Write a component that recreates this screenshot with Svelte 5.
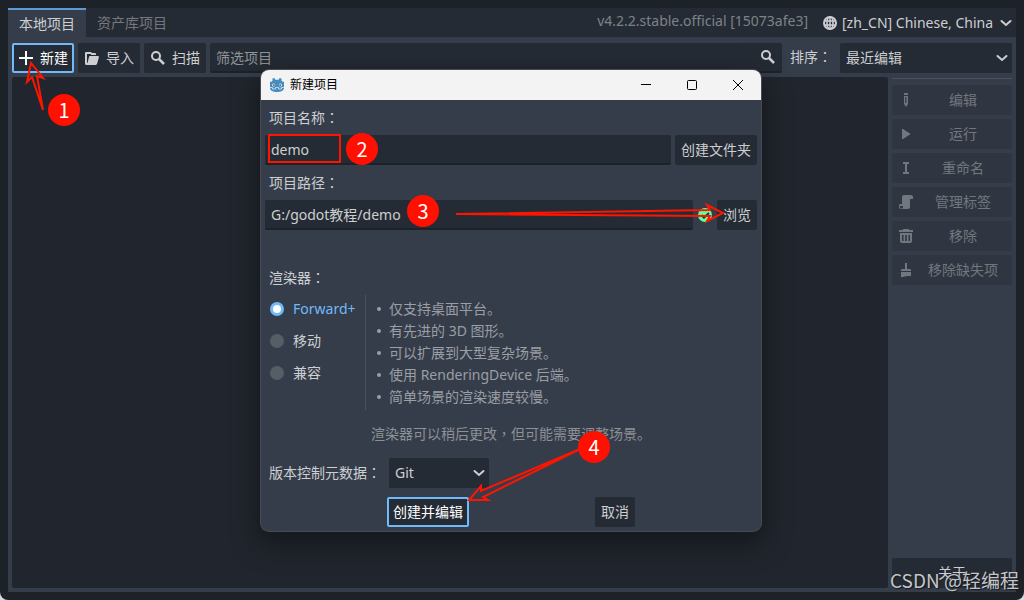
<script lang="ts">
  let name = $state('demo')
  let path = $state('G:/godot教程/demo')
  let filter = $state('')
  let renderer = $state('forward')

  const renderers = [
    { id: 'forward', label: 'Forward+' },
    { id: 'mobile', label: '移动' },
    { id: 'compat', label: '兼容' },
  ]

  const features = [
    '仅支持桌面平台。',
    '有先进的 3D 图形。',
    '可以扩展到大型复杂场景。',
    '使用 RenderingDevice 后端。',
    '简单场景的渲染速度较慢。',
  ]

  const actions = [
    { icon: 'edit', label: '编辑' },
    { icon: 'play', label: '运行' },
    { icon: 'rename', label: '重命名' },
    { icon: 'tags', label: '管理标签' },
    { icon: 'remove', label: '移除' },
    { icon: 'clear', label: '移除缺失项' },
  ]

  // tutorial steps, positioned on the page canvas
  const steps = [
    { n: 1, x: 64, y: 110 },
    { n: 2, x: 362, y: 149 },
    { n: 3, x: 423, y: 211 },
    { n: 4, x: 594, y: 447 },
  ]
</script>

{#snippet icon(kind: string)}
  <svg class="icon" width="16" height="16" viewBox="0 0 16 16" aria-hidden="true">
    {#if kind === 'add'}
      <path d="M7 1h2v6h6v2H9v6H7V9H1V7h6z" />
    {:else if kind === 'folder'}
      <path d="M2 2a1 1 0 0 0-1 1v10.500a1.500 1.500 0 0 0 1.500 1.500H11a2 2 0 0 0 2-1l2-7a1 1 0 0 0-1-1H6a1 1 0 0 0-1 1l-1.500 6H3V4h4v1h5V4a1 1 0 0 0-1-1H8L7 2z" />
    {:else if kind === 'search'}
      <circle cx="6" cy="6" r="4" fill="none" stroke="currentColor" stroke-width="2" />
      <path d="M9 9l5 5" stroke="currentColor" stroke-width="2.500" />
    {:else if kind === 'globe'}
      <circle cx="8" cy="8" r="6" fill="none" stroke="currentColor" stroke-width="2" />
      <ellipse cx="8" cy="8" rx="3" ry="6" fill="none" stroke="currentColor" stroke-width="1.600" />
      <path d="M8 2v12M2 6h12M2 10h12" stroke="currentColor" stroke-width="1.500" />
    {:else if kind === 'edit'}
      <path d="M7 1h2a1 1 0 0 1 1 1v1H6V2a1 1 0 0 1 1-1zM6 4h4v8l-2 3-2-3zm1.200 1v6h1.200V5z" fill-rule="evenodd" />
    {:else if kind === 'play'}
      <path d="M4 3.500v9a.7.7 0 0 0 1 .5l7-4.400a.7.7 0 0 0 0-1.200L5 3a.7.7 0 0 0-1 .5z" />
    {:else if kind === 'rename'}
      <path d="M5 2h6v2H9v8h2v2H5v-2h2V4H5z" />
    {:else if kind === 'tags'}
      <path d="M6 1a2 2 0 0 0-2 2v7H2.500A1.500 1.500 0 0 0 1 11.500V13a2 2 0 0 0 2 2h7a2 2 0 0 0 2-2V5h3V3a2 2 0 0 0-2-2zM2 12h3v1a1 1 0 0 1-3 0z" fill-rule="evenodd" />
    {:else if kind === 'remove'}
      <path d="M5 1h6v1h4v2H1V2h4zM2 5h12v8a2 2 0 0 1-2 2H4a2 2 0 0 1-2-2zm2 2v6h1.500V7zm3.200 0v6h1.600V7zm3.300 0v6H12V7z" fill-rule="evenodd" />
    {:else if kind === 'clear'}
      <path d="M7 1h2v6h3a1 1 0 0 1 1 1v1H3V8a1 1 0 0 1 1-1h3zM3 10h10v4H9l-4 1H3z" />
    {:else if kind === 'valid'}
      <circle cx="8" cy="8" r="7" fill="#5fff97" />
      <path d="M4.500 8.200l2.500 2.500 5-4.700" fill="none" stroke="#252b34" stroke-width="2" />
    {:else if kind === 'chevron'}
      <path d="M3.500 6L8 10l4.500-4" fill="none" stroke="currentColor" stroke-width="2" stroke-linecap="round" />
    {:else if kind === 'godot'}
      <path d="M3.500 1.500L5.500 1l.8 1.700h3.400L10.500 1l2 .5v2.300L14 5l1-.5V11c0 2.700-3.200 4-7 4s-7-1.300-7-4V4.500L2 5l1.500-1.200z" fill="#478cbf" />
      <path d="M1 10.500h2.500V12h3v-1.500h3V12h3v-1.500H15" fill="none" stroke="#dcebf5" stroke-width=".8" />
      <circle cx="4.700" cy="8" r="1.500" fill="#fff" />
      <circle cx="11.300" cy="8" r="1.500" fill="#fff" />
      <circle cx="4.900" cy="8.100" r=".9" fill="#414042" />
      <circle cx="11.100" cy="8.100" r=".9" fill="#414042" />
    {/if}
  </svg>
{/snippet}

<div class="page">
  <div class="manager">
    <header class="tabs">
      <button type="button" class="tab active">本地项目</button>
      <button type="button" class="tab">资产库项目</button>
      <span class="version">v4.2.2.stable.official [15073afe3]</span>
      <div class="language">
        {@render icon('globe')}
        <select aria-label="Language">
          <option>[zh_CN] Chinese, China</option>
        </select>
        {@render icon('chevron')}
      </div>
    </header>

    <main class="panel">
      <div class="toolbar">
        <button type="button" class="btn focused">{@render icon('add')}新建</button>
        <button type="button" class="btn">{@render icon('folder')}导入</button>
        <button type="button" class="btn">{@render icon('search')}扫描</button>
        <div class="search">
          <input type="text" aria-label="筛选项目" placeholder="筛选项目" bind:value={filter} />
          {@render icon('search')}
        </div>
        <label class="caption" for="sort">排序<span class="mid">：</span></label>
        <div class="picker sort">
          <select id="sort">
            <option>最近编辑</option>
          </select>
          {@render icon('chevron')}
        </div>
      </div>

      <div class="content">
        <div class="projects"></div>
        <aside class="sidebar">
          <hr />
          {#each actions as action}
            <button type="button" class="btn action" disabled>
              {@render icon(action.icon)}
              <span>{action.label}</span>
            </button>
          {/each}
          <button type="button" class="btn about">关于</button>
        </aside>
      </div>
    </main>
  </div>

  <div class="dialog" role="dialog" aria-labelledby="dialog-title">
    <div class="titlebar">
      {@render icon('godot')}
      <h1 id="dialog-title">新建项目</h1>
      <button type="button" aria-label="最小化">
        <svg width="12" height="12" viewBox="0 0 12 12"><path d="M1 5.500h10" /></svg>
      </button>
      <button type="button" aria-label="最大化">
        <svg width="12" height="12" viewBox="0 0 12 12"><rect x="1.500" y="1.500" width="9" height="9" rx="1" /></svg>
      </button>
      <button type="button" aria-label="关闭">
        <svg width="12" height="12" viewBox="0 0 12 12"><path d="M1 1l10 10M11 1L1 11" /></svg>
      </button>
    </div>

    <form class="form">
      <label class="caption" for="name">项目名称<span class="mid">：</span></label>
      <div class="row">
        <input id="name" type="text" bind:value={name} />
        <button type="button" class="btn">创建文件夹</button>
      </div>

      <label class="caption" for="path">项目路径<span class="mid">：</span></label>
      <div class="row">
        <input id="path" type="text" bind:value={path} />
        {@render icon('valid')}
        <button type="button" class="btn">浏览</button>
      </div>

      <div class="message"></div>

      <div class="caption" id="renderer-label">渲染器<span class="mid">：</span></div>
      <div class="renderer">
        <div class="radios" role="radiogroup" aria-labelledby="renderer-label">
          {#each renderers as item}
            <label class:checked={renderer === item.id}>
              <input type="radio" name="renderer" value={item.id} bind:group={renderer} />
              {item.label}
            </label>
          {/each}
        </div>
        <ul>
          {#each features as feature}
            <li>{feature}</li>
          {/each}
        </ul>
      </div>
      <p class="note">渲染器可以稍后更改<span class="mid">，</span>但可能需要调整场景。</p>

      <div class="row">
        <label class="caption" for="vcs">版本控制元数据<span class="mid">：</span></label>
        <div class="picker vcs">
          <select id="vcs">
            <option>Git</option>
          </select>
          {@render icon('chevron')}
        </div>
      </div>

      <div class="buttons">
        <button type="button" class="btn focused">创建并编辑</button>
        <button type="button" class="btn">取消</button>
      </div>
    </form>
  </div>

  <div class="watermark">CSDN @轻编程</div>

  <svg class="arrows" aria-hidden="true">
    <rect x="269" y="135" width="71" height="27" />
    <path d="M43 110L37 76l6 2-12-15-4 19 5-5z" />
    <path d="M456 214l254-4-3-5 16 8-16 8 3-5z" />
    <path d="M580 449l-99 42v-5l-12 14h19l-5-3z" />
  </svg>
  {#each steps as step}
    <span class="step" style="left: {step.x}px; top: {step.y}px">{step.n}</span>
  {/each}
</div>

<style>
  :global(body) {
    background: #d8dade;
  }
  .page {
    position: relative;
    box-sizing: border-box;
    display: flex;
    min-height: 100vh;
    padding: 8px;
    overflow: hidden;
    border-radius: 0 0 8px 8px;
    background: #1d2229;
    color: #cdcfd2;
    font: 14px/20px "Noto Sans", "Noto Sans CJK SC", sans-serif;
  }
  button,
  input,
  select {
    box-sizing: border-box;
    margin: 0;
    border: 0;
    border-radius: 2px;
    background: #252b34;
    color: inherit;
    font: inherit;
    outline: none;
  }
  select {
    appearance: none;
  }
  .icon {
    flex: none;
    fill: currentColor;
  }
  /* centred full-width punctuation, kept out of the line height */
  .mid {
    font-family: "Noto Sans CJK TC", sans-serif;
    line-height: 0;
  }

  .manager {
    flex: 1;
    display: flex;
    flex-direction: column;
  }
  .tabs {
    display: flex;
    height: 29px;
    background: #252b34;
    border-radius: 2px 2px 0 0;
  }
  .tab {
    padding: 0 11px;
    border-radius: 0;
    color: #75797f;
  }
  .tab.active {
    border-top: 2px solid #5c9bd3;
    background: #363d4a;
    color: #cdcfd2;
  }
  .version {
    margin-left: auto;
    padding-top: 3px;
    color: #7e8288;
  }
  .language {
    display: flex;
    align-items: center;
    margin-left: 14px;
    padding-right: 2px;
  }
  .language select {
    padding: 0 4px;
  }

  .panel {
    flex: 1;
    display: flex;
    flex-direction: column;
    gap: 4px;
    padding: 6px 4px 4px;
    background: #363d4a;
  }
  .toolbar {
    display: flex;
    gap: 4px;
    height: 30px;
  }
  .btn {
    display: flex;
    align-items: center;
    justify-content: center;
    gap: 6px;
    height: 30px;
    padding: 0 6px;
    white-space: nowrap;
  }
  .btn.focused {
    box-shadow: inset 0 0 0 2px #70bafa;
    color: #fff;
  }
  .search {
    flex: 1;
    display: flex;
    align-items: center;
    padding-right: 6px;
    border-bottom: 2px solid #1d2229;
    border-radius: 2px;
    background: #252b34;
  }
  .search input {
    flex: 1;
    padding: 2px 6px 0;
  }
  .search input::placeholder {
    color: #909499;
    opacity: 1;
  }
  .caption {
    padding: 0 4px;
    line-height: 27px;
    white-space: nowrap;
  }
  .toolbar .caption,
  .row .caption {
    line-height: 28px;
  }
  .picker {
    display: flex;
    align-items: center;
    height: 30px;
    padding-right: 2px;
    border-radius: 2px;
    background: #252b34;
    box-sizing: border-box;
  }
  .picker select {
    flex: 1;
    padding: 0 6px;
  }
  .sort {
    width: 172px;
  }
  .vcs {
    width: 100px;
  }

  .content {
    flex: 1;
    display: flex;
    gap: 4px;
  }
  .projects {
    flex: 1;
    border-radius: 2px;
    background: #21262e;
  }
  .sidebar {
    display: flex;
    flex-direction: column;
    gap: 4px;
    width: 120px;
  }
  hr {
    width: 100%;
    height: 1px;
    margin: 1px 0 2px;
    border: 0;
    background: #4c525e;
  }
  .action {
    padding-right: 0;
    gap: 0;
    background: #303641;
    color: #72767e;
  }
  .action span {
    flex: 1;
    text-align: center;
  }
  .about {
    margin-top: auto;
  }

  .dialog {
    position: absolute;
    left: 261px;
    top: 70px;
    width: 500px;
    overflow: hidden;
    border-radius: 8px;
    background: #363d4a;
    box-shadow: 0 0 0 1px #484c52, 0 10px 28px 4px rgba(0, 0, 0, 0.4);
  }
  .titlebar {
    display: flex;
    align-items: center;
    height: 30px;
    padding-left: 8px;
    background: #f3f3f3;
    color: #000;
  }
  .titlebar h1 {
    flex: 1;
    margin: 0 0 0 5px;
    font-size: 12px;
    line-height: 18px;
    font-weight: 400;
  }
  .titlebar button {
    display: grid;
    place-items: center;
    width: 46px;
    height: 28px;
    padding: 0;
    border-radius: 0;
    background: none;
  }
  .titlebar button svg {
    fill: none;
    stroke: #000;
  }
  .form {
    display: flex;
    flex-direction: column;
    gap: 4px;
    padding: 4px;
  }
  .row {
    display: flex;
    align-items: center;
    gap: 4px;
  }
  .row input {
    flex: 1;
    min-width: 0;
    height: 30px;
    padding: 0 6px;
    border-bottom: 2px solid #1d2229;
  }
  .message {
    height: 26px;
  }
  .renderer {
    display: flex;
    height: 115px;
  }
  .radios {
    display: flex;
    flex-direction: column;
    gap: 4px;
    width: 100px;
    border-right: 1px solid #4c525e;
  }
  .radios label {
    display: flex;
    align-items: center;
    gap: 9px;
    height: 28px;
    padding-left: 5px;
  }
  .radios label.checked {
    color: #70bafa;
  }
  .radios input {
    appearance: none;
    width: 14px;
    height: 14px;
    border-radius: 50%;
    background: #565d67;
  }
  .radios input:checked {
    border: 3px solid #70bafa;
    background: #fff;
  }
  ul {
    margin: 0;
    padding: 3px 0 0 11px;
    list-style: none;
    color: #9a9ea5;
  }
  li {
    display: flex;
    align-items: center;
    gap: 8px;
    line-height: 22px;
  }
  li::before {
    content: '';
    width: 4px;
    height: 4px;
    border-radius: 50%;
    background: currentColor;
  }
  .note {
    margin: 0;
    line-height: 40px;
    text-align: center;
    color: #8c9097;
  }
  .buttons {
    display: flex;
    justify-content: space-evenly;
    gap: 4px;
    padding-top: 5px;
  }

  .watermark {
    position: absolute;
    right: 5px;
    bottom: 6px;
    color: #c4c6c9;
    font: 19px/28px "Noto Sans CJK SC", sans-serif;
    text-shadow: 1px 1px 1px #14171c;
  }
  .arrows {
    position: absolute;
    inset: 0;
    width: 100%;
    height: 100%;
    fill: none;
    stroke: #ff1400;
    stroke-width: 2;
    pointer-events: none;
  }
  .step {
    position: absolute;
    width: 32px;
    height: 32px;
    margin: -16px 0 0 -16px;
    border-radius: 50%;
    background: #ff1000;
    color: #fff;
    font: 20px/32px "Noto Sans CJK SC", sans-serif;
    text-align: center;
  }
</style>
